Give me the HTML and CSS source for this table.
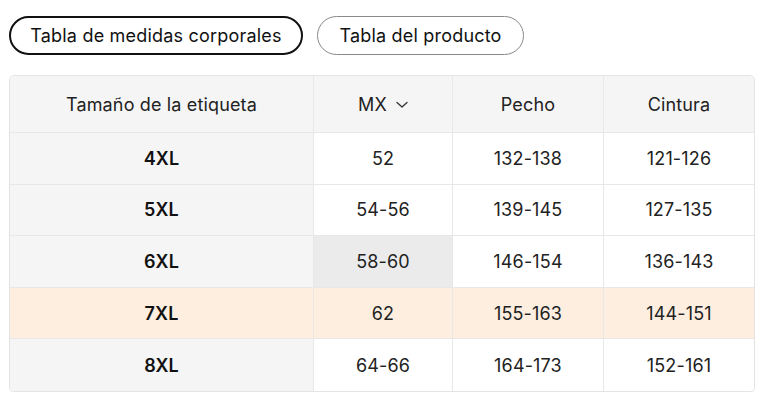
FILE: index.html
```html
<!DOCTYPE html>
<html lang="es">
<head>
<meta charset="utf-8">
<title>Tabla de tallas</title>
<link rel="stylesheet" href="styles.css">
</head>
<body>
<div class="page">
  <div class="tabs">
    <button class="tab tab-active">Tabla de medidas corporales</button>
    <button class="tab">Tabla del producto</button>
  </div>
  <div class="table-wrap">
    <table class="sizes">
      <colgroup>
        <col class="c1"><col class="c2"><col class="c3"><col class="c4">
      </colgroup>
      <thead>
        <tr>
          <th>Tamaño de la etiqueta</th>
          <th><span class="mx">MX <svg class="chev" width="12" height="8" viewBox="0 0 12 8"><path d="M1 1.5 L6 6 L11 1.5" fill="none" stroke="#333" stroke-width="1.3" stroke-linecap="round" stroke-linejoin="round"/></svg></span></th>
          <th>Pecho</th>
          <th>Cintura</th>
        </tr>
      </thead>
      <tbody>
        <tr><td class="size">4XL</td><td>52</td><td>132-138</td><td>121-126</td></tr>
        <tr><td class="size">5XL</td><td>54-56</td><td>139-145</td><td>127-135</td></tr>
        <tr><td class="size">6XL</td><td class="hover">58-60</td><td>146-154</td><td>136-143</td></tr>
        <tr class="hl"><td class="size">7XL</td><td>62</td><td>155-163</td><td>144-151</td></tr>
        <tr><td class="size">8XL</td><td>64-66</td><td>164-173</td><td>152-161</td></tr>
      </tbody>
    </table>
  </div>
</div>
</body>
</html>
```
FILE: styles.css
```css
* { box-sizing: border-box; }
html, body { margin: 0; padding: 0; background: #fff; }
body {
  font-family: Inter, "Noto Sans", "Liberation Sans", sans-serif;
  color: #222;
}
.page { padding: 16px 25px 0 9px; }
.tabs { display: flex; gap: 14px; }
.tab {
  font-family: inherit;
  font-size: 18px;
  letter-spacing: 0.2px;
  color: #111;
  background: #fff;
  height: 39px;
  padding: 0;
  border: 1px solid #8a8a8a;
  border-radius: 20px;
  cursor: pointer;
}
.tab-active { border: 2px solid #111; }
.tabs .tab:first-child { width: 294px; }
.tabs .tab:last-child { width: 207px; }
.table-wrap {
  margin-top: 20px;
  width: 746px;
  border: 1px solid #e4e4e4;
  border-radius: 5px;
  overflow: hidden;
  box-shadow: 0 1px 1px rgba(0,0,0,0.06);
}
.sizes {
  width: 744px;
  border-collapse: separate;
  border-spacing: 0;
  table-layout: fixed;
  font-size: 18px;
  letter-spacing: 0.15px;
}
.c1 { width: 304px; }
.c2 { width: 139px; }
.c3 { width: 151px; }
.c4 { width: 150px; }
.sizes th, .sizes td {
  text-align: center;
  border-right: 1px solid #e8e8e8;
  border-bottom: 1px solid #e8e8e8;
  padding: 0;
  background: #fff;
}
.sizes th:last-child, .sizes td:last-child { border-right: none; }
.sizes tbody tr:last-child td { border-bottom: none; }
.sizes th {
  height: 57px;
  font-weight: 400;
  background: #f5f5f5;
  color: #222;
}
.sizes td { height: 51.6px; }
.sizes td.size { background: #f5f5f5; font-weight: 600; color: #111; }
.sizes td.hover { background: #ebebeb; }
.sizes tr.hl td { background: #fdeee0; }
.mx { display: inline-flex; align-items: center; gap: 9px; }
.chev { display: block; margin-top: 1px; }
```
